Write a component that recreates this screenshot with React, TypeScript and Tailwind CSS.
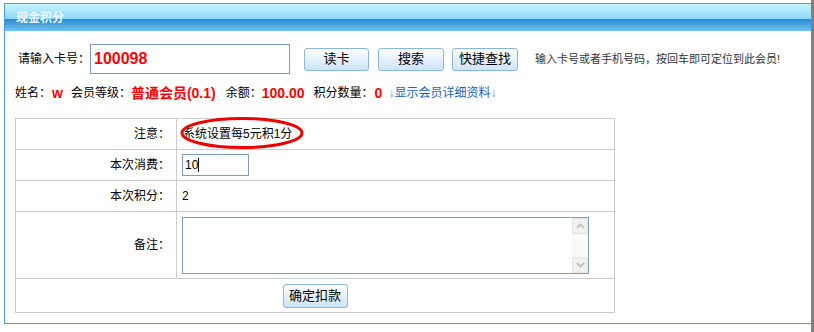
import * as React from 'react';

const font = { fontFamily: '"Liberation Sans", "Noto Sans CJK SC", sans-serif' };

function Btn({ label, className = '' }: { label: string; className?: string }) {
  return (
    <div
      className={`flex items-center justify-center h-[23px] border border-[#8ab6e0] rounded-[3px] bg-[linear-gradient(to_bottom,#ffffff,#cbe4fa)] text-[13px] text-black ${className}`}
    >
      {label}
    </div>
  );
}

function Chevron({ up }: { up?: boolean }) {
  return (
    <svg width="9" height="6" viewBox="0 0 9 6">
      <path
        d={up ? 'M1 5 L4.5 1.5 L8 5' : 'M1 1 L4.5 4.5 L8 1'}
        fill="none"
        stroke="#c4c4bc"
        strokeWidth="2"
      />
    </svg>
  );
}

export default function App() {
  return (
    <div className="w-[814px] h-[332px] bg-white flex" style={font}>
      <div className="flex-1 pl-[4px] pt-[3px]">
        {/* Panel */}
        <div className="h-[321px] border-l border-t border-b border-[#4f9bd6] flex flex-col">
          <div className="h-[27px] flex items-center pl-[11px] bg-[linear-gradient(to_bottom,#c9f3ff_0%,#8cd9f8_54%,#2787cf_55%,#6dc3f2_100%)]">
            <span className="text-[12px] font-bold text-[#f2f6ff]">现金积分</span>
          </div>

          <div className="pl-[10px]">
            {/* Card number row */}
            <div className="mt-[13px] h-[30px] flex items-center ml-[3px] text-[12px]">
              <span className="w-[72px]">请输入卡号：</span>
              <div className="w-[200px] h-[30px] border border-[#7f9db9] flex items-center pl-[3px]">
                <span className="text-[16px] font-bold text-[#ff0000]">100098</span>
              </div>
              <Btn label="读卡" className="ml-[14px] w-[65px]" />
              <Btn label="搜索" className="ml-[9px] w-[66px]" />
              <Btn label="快捷查找" className="ml-[8px] w-[66px]" />
              <span className="ml-[17px] text-[11px] text-[#333]">输入卡号或者手机号码，按回车即可定位到此会员!</span>
            </div>

            {/* Member info row */}
            <div className="mt-[9px] h-[20px] flex items-center text-[12px] text-black">
              <span>姓名：</span>
              <span className="ml-[1px] text-[14px] font-bold text-[#ff0000]">w</span>
              <span className="ml-[8px]">会员等级：</span>
              <span className="text-[14px] font-bold text-[#ff0000]">普通会员(0.1)</span>
              <span className="ml-[10px]">余额：</span>
              <span className="text-[14px] font-bold text-[#ff0000]">100.00</span>
              <span className="ml-[9px]">积分数量：</span>
              <span className="ml-[1px] text-[14px] font-bold text-[#ff0000]">0</span>
              <span className="ml-[6px] text-[#1a5fc4]">
                <span className="text-[#6a9ad8]">↓</span>显示会员详细资料<span className="text-[#6a9ad8]">↓</span>
              </span>
            </div>

            {/* Form table */}
            <div className="mt-[15px] w-[600px] border-l border-t border-r border-[#cccccc] text-[12px] text-black">
              <div className="flex h-[31px] border-b border-[#cccccc]">
                <div className="w-[161px] border-r border-[#cccccc] flex items-center justify-end pr-[6px]">注意：</div>
                <div className="flex-1 flex items-center pl-[6px] relative">
                  <span>系统设置每5元积1分</span>
                  <svg className="absolute left-[2px] top-[-3px]" width="126" height="34" viewBox="0 0 126 34">
                    <ellipse cx="63" cy="17" rx="60" ry="14.5" fill="none" stroke="#ee0000" strokeWidth="3" />
                  </svg>
                </div>
              </div>
              <div className="flex h-[31px] border-b border-[#cccccc]">
                <div className="w-[161px] border-r border-[#cccccc] flex items-center justify-end pr-[6px]">本次消费：</div>
                <div className="flex-1 flex items-center pl-[5px]">
                  <div className="w-[67px] h-[22px] border border-[#7f9db9] flex items-center pl-[2px]">
                    <span>10</span>
                    <span className="w-[1px] h-[14px] bg-black" />
                  </div>
                </div>
              </div>
              <div className="flex h-[31px] border-b border-[#cccccc]">
                <div className="w-[161px] border-r border-[#cccccc] flex items-center justify-end pr-[6px]">本次积分：</div>
                <div className="flex-1 flex items-center pl-[5px]">2</div>
              </div>
              <div className="flex h-[67px] border-b border-[#cccccc]">
                <div className="w-[161px] border-r border-[#cccccc] flex items-center justify-end pr-[6px]">备注：</div>
                <div className="flex-1 flex items-center pl-[5px]">
                  <div className="w-[407px] h-[57px] border border-[#7f9db9] flex justify-end">
                    <div className="w-[16px] h-full bg-[#fbfbf6] flex flex-col justify-between">
                      <div className="h-[16px] border border-[#e4e4dc] bg-[#f2f2ec] rounded-[2px] flex items-center justify-center">
                        <Chevron up />
                      </div>
                      <div className="h-[16px] border border-[#e4e4dc] bg-[#f2f2ec] rounded-[2px] flex items-center justify-center">
                        <Chevron />
                      </div>
                    </div>
                  </div>
                </div>
              </div>
              <div className="flex h-[34px] border-b border-[#cccccc] items-center justify-center">
                <Btn label="确定扣款" className="w-[65px] h-[24px]" />
              </div>
            </div>
          </div>
        </div>
      </div>
      <div className="w-[3px] h-full bg-[#808080]" />
    </div>
  );
}
